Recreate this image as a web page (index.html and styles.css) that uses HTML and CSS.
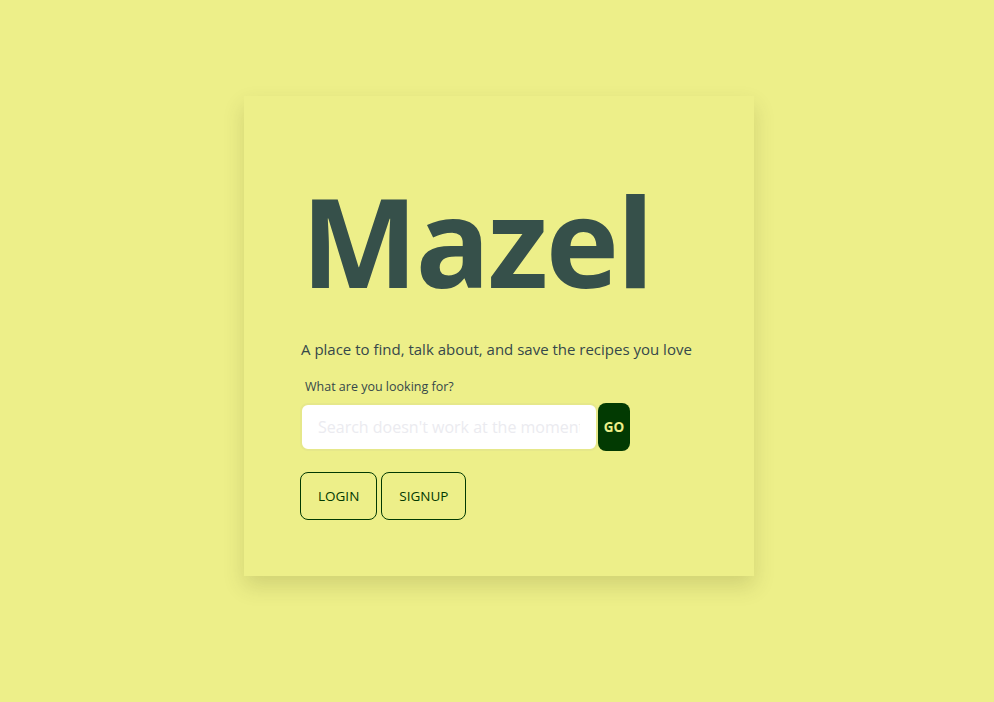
FILE: index.html
```html
<!DOCTYPE html>
<html>
<head>
<meta charset="utf-8">
<link rel="stylesheet" href="styles.css">
</head>
<body>
<main class="page">
  <section class="card">
    <h1 class="title">Mazel</h1>
    <p class="tagline">A place to find, talk about, and save the recipes you love</p>
    <form class="search">
      <label class="search-label" for="q">What are you looking for?</label>
      <div class="search-row">
        <input id="q" class="search-input" type="text" placeholder="Search doesn't work at the moment">
        <button type="button" class="go">GO</button>
      </div>
    </form>
    <div class="auth">
      <button type="button" class="outline">LOGIN</button>
      <button type="button" class="outline">SIGNUP</button>
    </div>
  </section>
</main>
</body>
</html>
```

FILE: styles.css
```css
html, body {
  margin: 0;
  padding: 0;
  background: #edef89;
  font-family: "Open Sans", "Noto Sans", sans-serif;
}
.page {
  display: flex;
  justify-content: center;
  padding: 96px 0 100px 4px;
}
.card {
  width: 510px;
  height: 480px;
  box-sizing: border-box;
  padding: 82px 56px 0 56px;
  background: #edef89;
  box-shadow: 0 10px 20px rgba(60, 60, 10, 0.16);
  display: flex;
  flex-direction: column;
  align-items: flex-start;
}
.title {
  margin: 0;
  font-size: 124px;
  line-height: 124px;
  font-weight: 700;
  color: #36504a;
  letter-spacing: -2.5px;
  padding-left: 1px;
}
.tagline {
  margin: 36px 0 0 1px;
  font-size: 15px;
  line-height: 22px;
  color: #36484a;
  white-space: nowrap;
}
.search {
  margin-top: 18px;
  display: flex;
  flex-direction: column;
}
.search-label {
  font-size: 12.5px;
  line-height: 18px;
  color: #36484a;
  padding-left: 5px;
  margin-bottom: 7px;
}
.search-row {
  display: flex;
}
.search-input {
  width: 298px;
  height: 48px;
  box-sizing: border-box;
  border: 2px solid #e6e88a;
  border-radius: 8px;
  background: #fff;
  padding: 0 16px;
  font-family: inherit;
  font-size: 16px;
  color: #333;
  outline: none;
}
.search-input::placeholder {
  color: #ebebf0;
}
.go {
  width: 32px;
  height: 48px;
  border: none;
  border-radius: 8px;
  background: #023a02;
  color: #edef89;
  font-family: inherit;
  font-weight: 700;
  font-size: 13.5px;
  padding: 0;
}
.auth {
  display: flex;
  gap: 4px;
  margin-top: 21px;
}
.outline {
  height: 48px;
  padding: 0 17px;
  border: 1px solid #023a02;
  border-radius: 8px;
  background: transparent;
  color: #023a02;
  font-family: inherit;
  font-size: 13.5px;
  font-weight: 500;
}
```
